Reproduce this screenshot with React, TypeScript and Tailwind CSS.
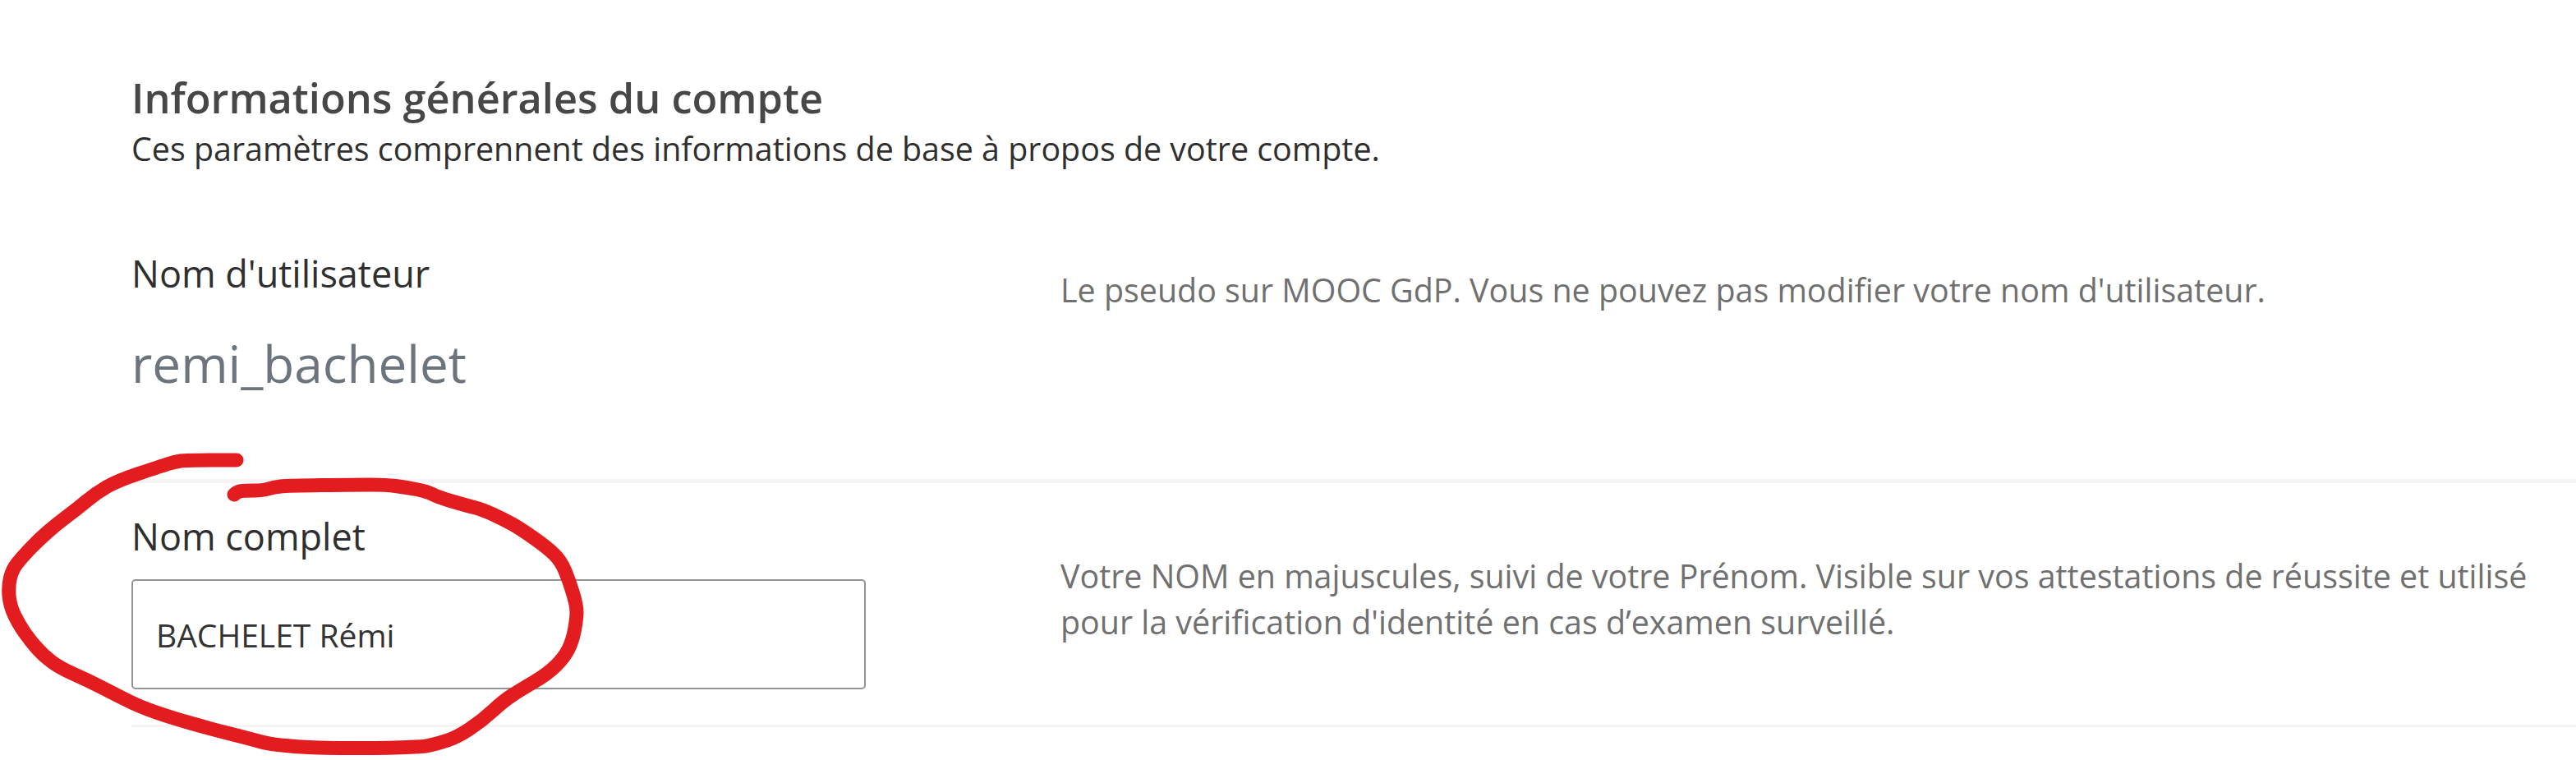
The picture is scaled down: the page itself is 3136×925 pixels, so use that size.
import React from 'react';

const font = { fontFamily: '"Open Sans", "Noto Sans", sans-serif' };

// hand-drawn red loop around the full-name field
const loop: [number, number][] = [
  [288, 560], [227, 560], [213, 562], [197, 567], [143, 585], [117, 600], [93, 620], [70, 637],
  [47, 657], [27, 678], [15, 693], [10, 713], [12, 737], [23, 760], [37, 780], [53, 798],
  [73, 813], [107, 828], [140, 845], [170, 860], [207, 873], [260, 888], [300, 898], [333, 907],
  [400, 911], [510, 910], [533, 905], [557, 897], [587, 877], [613, 853], [633, 840], [667, 820],
  [687, 800], [697, 780], [702, 753], [702, 737], [693, 707], [683, 683], [667, 667], [633, 643],
  [613, 632], [587, 620], [567, 615], [533, 605], [520, 598], [493, 593], [470, 590], [433, 590],
  [350, 591], [333, 593], [320, 597], [300, 597], [290, 598], [285, 602],
];

const smooth = (pts: [number, number][]) => {
  let d = `M${pts[0][0]} ${pts[0][1]}`;
  for (let i = 1; i < pts.length - 1; i++) {
    const mx = (pts[i][0] + pts[i + 1][0]) / 2;
    const my = (pts[i][1] + pts[i + 1][1]) / 2;
    d += ` Q${pts[i][0]} ${pts[i][1]} ${mx} ${my}`;
  }
  const last = pts[pts.length - 1];
  d += ` L${last[0]} ${last[1]}`;
  return d;
};

const Row = ({
  children,
  help,
  helpPad,
  border,
}: {
  children: React.ReactNode;
  help: React.ReactNode;
  helpPad: string;
  border: string;
}) => (
  <div className={`flex ${border} border-[#f4f4f4]`}>
    <div className="w-[1131px] shrink-0">{children}</div>
    <div className={`w-[1830px] ${helpPad} text-[39.4px] leading-[56px] text-[#707070]`}>{help}</div>
  </div>
);

export default function App() {
  return (
    <div className="relative w-[3136px] h-[925px] overflow-hidden bg-white" style={font}>
      <div className="pl-[160px] pt-[89px]">
        <h2 className="text-[50.5px] leading-[60px] font-semibold text-[#474747]">
          Informations générales du compte
        </h2>
        <p className="mt-[8px] text-[39.4px] leading-[48px] text-[#2f2f2f]">
          Ces paramètres comprennent des informations de base à propos de votre compte.
        </p>

        <div className="mt-[63px]">
          <Row
            border="border-b-[5px]"
            helpPad="pt-[57px]"
            help="Le pseudo sur MOOC GdP. Vous ne pouvez pas modifier votre nom d'utilisateur."
          >
            <div className="pt-[31px] pb-[103px]">
              <div className="text-[45px] leading-[68px] text-[#2f2f2f]">Nom d'utilisateur</div>
              <div className="mt-[38px] text-[62px] leading-[75px] text-[#6c757d]">remi_bachelet</div>
            </div>
          </Row>

          <Row
            border="border-b-[3px]"
            helpPad="pt-[85px]"
            help="Votre NOM en majuscules, suivi de votre Prénom. Visible sur vos attestations de réussite et utilisé pour la vérification d'identité en cas d’examen surveillé."
          >
            <div className="pt-[31px] pb-[43px]">
              <label className="block text-[45px] leading-[68px] text-[#2f2f2f]">Nom complet</label>
              <input
                readOnly
                value="BACHELET Rémi"
                className="mt-[18px] block w-[894px] h-[134px] px-[28px] border-2 border-[#949494] rounded-[5px] bg-white text-[39px] text-[#333333] outline-none"
              />
            </div>
          </Row>
        </div>
      </div>

      <svg
        className="absolute inset-0 pointer-events-none"
        width="3136"
        height="925"
        viewBox="0 0 3136 925"
      >
        <path
          d={smooth(loop)}
          fill="none"
          stroke="#e31c1f"
          strokeWidth="17"
          strokeLinecap="round"
          strokeLinejoin="round"
        />
      </svg>
    </div>
  );
}
